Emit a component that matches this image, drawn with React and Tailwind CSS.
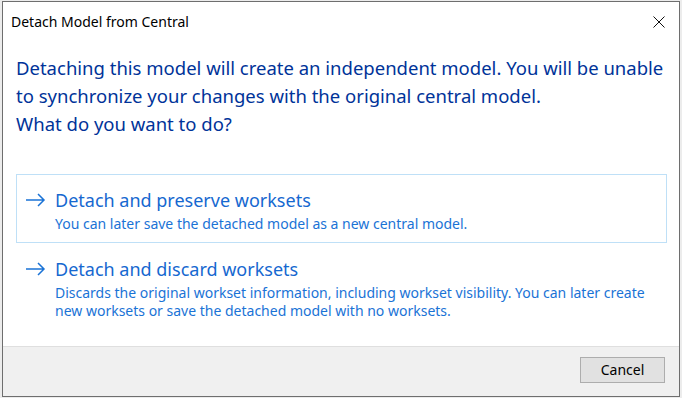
export default function App() {
  const font = { fontFamily: '"Noto Sans", "Open Sans", sans-serif' }
  return (
    <div className="w-[682px] h-[398px] bg-[#ececec] pl-[2px] pt-[1px] overflow-hidden" style={font}>
      <div className="w-[678px] h-[396px] bg-white border border-[#6e6e6e] flex flex-col">
        {/* title bar */}
        <div className="h-[38px] flex items-center justify-between pl-[8px] pr-[14px]">
          <span className="text-[14px] text-black">Detach Model from Central</span>
          <svg width="12" height="12" viewBox="0 0 12 12" className="mt-[1px]">
            <path d="M0.5 0.5 L11.5 11.5 M11.5 0.5 L0.5 11.5" stroke="#111" strokeWidth="1" />
          </svg>
        </div>

        {/* content */}
        <div className="flex-1 px-[13px] pt-[14px]">
          <p className="text-[18.5px] leading-[28px] text-[#003399]">
            Detaching this model will create an independent model. You will be unable
            <br />
            to synchronize your changes with the original central model.
            <br />
            What do you want to do?
          </p>

          <div className="mt-[36px] flex flex-col">
            <CommandLink
              active
              title="Detach and preserve worksets"
              desc={['You can later save the detached model as a new central model.']}
            />
            <CommandLink
              title="Detach and discard worksets"
              desc={[
                'Discards the original workset information, including workset visibility. You can later create',
                'new worksets or save the detached model with no worksets.',
              ]}
            />
          </div>
        </div>

        {/* footer */}
        <div className="h-[50px] bg-[#f0f0f0] border-t border-[#dfdfdf] flex items-start justify-end pr-[14px] pt-[10px]">
          <button className="w-[85px] h-[26px] bg-[#e1e1e1] border border-[#adadad] text-[14px] leading-none text-black">
            Cancel
          </button>
        </div>
      </div>
    </div>
  )
}

function CommandLink({ title, desc, active }) {
  return (
    <div
      className={
        'w-[651px] border pl-[8px] pt-[11px] pb-[9px] flex gap-[9px] ' +
        (active ? 'border-[#bfe0f7]' : 'border-transparent')
      }
    >
      <svg width="21" height="14" viewBox="0 0 21 14" className="mt-[7px] shrink-0">
        <path d="M1 7 H19 M13 1 L19 7 L13 13" stroke="#1a73d6" strokeWidth="1.5" fill="none" />
      </svg>
      <div className="flex flex-col">
        <span className="text-[18px] leading-[28px] text-[#1668d0]">{title}</span>
        <div className="mt-[1px] flex flex-col">
          {desc.map((d) => (
            <span key={d} className="text-[14px] leading-[18px] text-[#1a73d6]">
              {d}
            </span>
          ))}
        </div>
      </div>
    </div>
  )
}
